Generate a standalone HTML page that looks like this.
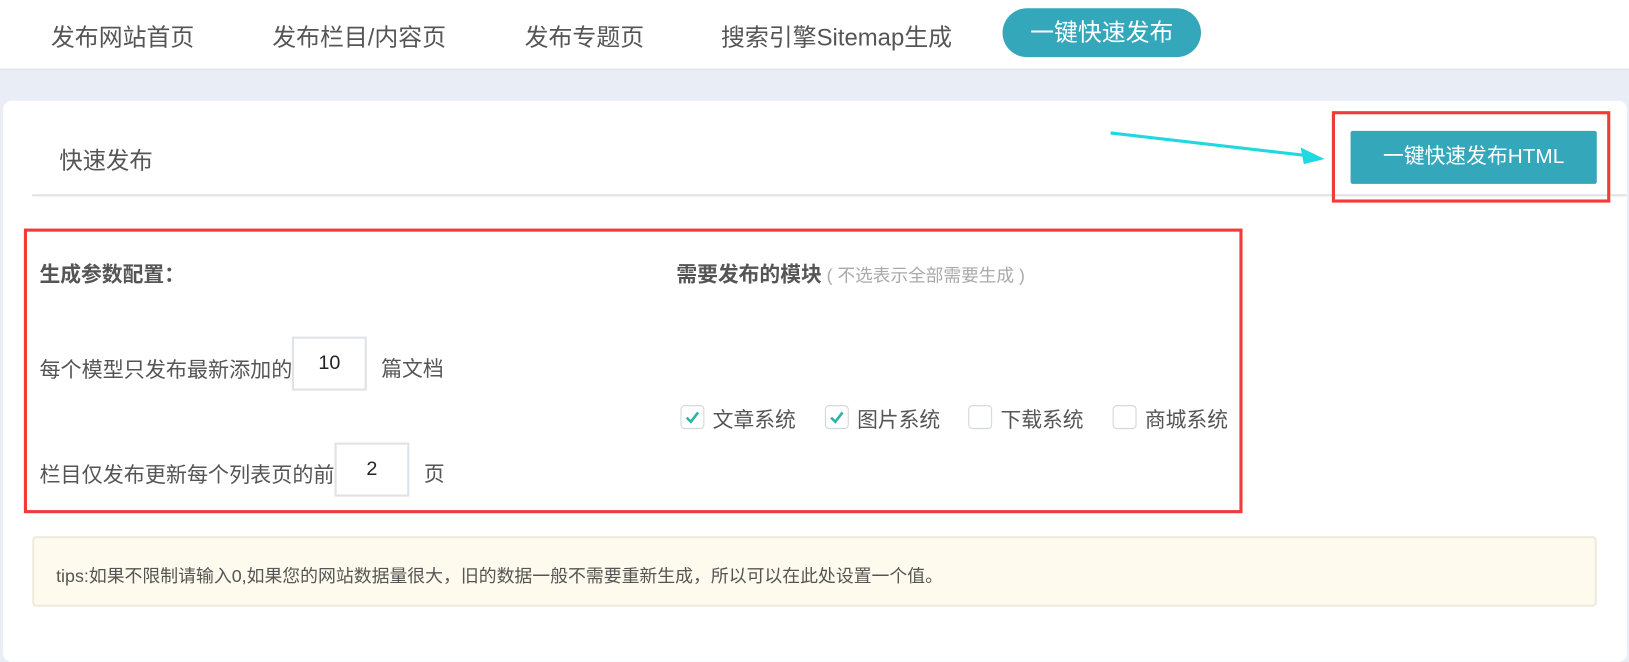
<!DOCTYPE html>
<html><head><meta charset="utf-8"><style>
*{margin:0;padding:0;box-sizing:border-box}
body{width:1629px;height:625px;overflow:hidden;background:#e9eef6;font-family:"Liberation Sans","Noto Sans CJK SC",sans-serif;color:#555;position:relative}
#w{position:absolute;left:0;top:0;width:1568px;height:602px;transform:scale(1.0389);transform-origin:0 0}
.a{position:absolute;white-space:nowrap}
.nav{position:absolute;left:0;top:0;width:1568px;height:68px;background:#fff;border-bottom:2px solid #e3e6ea}
.nav .a{font-size:23px;top:17px;color:#555}
.pill{left:965px;top:8px!important;width:191px;height:47px;border-radius:24px;background:#35a7bb;color:#fff!important;text-align:center;line-height:47px}
.card{position:absolute;left:3px;top:97px;width:1563px;height:540px;background:#fff;border-radius:8px}
.inp{position:absolute;width:72px;height:52px;border:2px solid #dde3e6;text-align:center;line-height:48px;font-size:19px;color:#222}
.cb{position:absolute;width:23px;height:23px;border:1px solid #cfd6da;border-radius:4px;top:390px;background:#fff}
.lbl{font-size:20px;color:#555;top:388px}
</style></head><body><div id="w">
<div class="nav">
<div class="a" style="left:49px">发布网站首页</div>
<div class="a" style="left:262px">发布栏目/内容页</div>
<div class="a" style="left:505px">发布专题页</div>
<div class="a" style="left:694px">搜索引擎Sitemap生成</div>
<div class="a pill">一键快速发布</div>
</div>
<div class="card"></div>
<div class="a" style="left:57px;top:137px;font-size:22.5px;color:#555">快速发布</div>
<div class="a" style="left:31px;top:187px;width:1535px;height:2px;background:#dde3e6"></div>
<svg class="a" style="left:1060px;top:120px" width="225" height="45"><line x1="9" y1="8" x2="200" y2="30" stroke="#1ed9df" stroke-width="3"/><polygon points="215,33 192,22 195,38" fill="#1ed9df"/></svg>
<div class="a" style="left:1282px;top:107px;width:268px;height:88px;border:3px solid #f23a3a"></div>
<div class="a" style="left:1300px;top:126px;width:237px;height:51px;background:#35a7bb;color:#fff;font-size:20px;text-align:center;line-height:51px;border-radius:2px">一键快速发布HTML</div>
<div class="a" style="left:23px;top:220px;width:1173px;height:274px;border:3px solid #f23a3a"></div>
<div class="a" style="left:38px;top:248px;font-size:20px;font-weight:bold;color:#555">生成参数配置：</div>
<div class="a" style="left:651px;top:248px;font-size:20px;font-weight:bold;color:#555">需要发布的模块<span style="font-weight:normal;font-size:17px;color:#aaa"> ( 不选表示全部需要生成 )</span></div>
<div class="a" style="left:38px;top:339px;font-size:20.3px">每个模型只发布最新添加的</div>
<div class="inp" style="left:281px;top:324px">10</div>
<div class="a" style="left:367px;top:339px;font-size:20px">篇文档</div>
<div class="a" style="left:38px;top:440px;font-size:20.3px">栏目仅发布更新每个列表页的前</div>
<div class="inp" style="left:322px;top:426px">2</div>
<div class="a" style="left:408px;top:440px;font-size:20px">页</div>
<div class="cb" style="left:655px"><svg width="21" height="21"><path d="M5 11 L9 15 L16 6" stroke="#2bb3a8" stroke-width="2.5" fill="none"/></svg></div>
<div class="a lbl" style="left:686px">文章系统</div>
<div class="cb" style="left:794px"><svg width="21" height="21"><path d="M5 11 L9 15 L16 6" stroke="#2bb3a8" stroke-width="2.5" fill="none"/></svg></div>
<div class="a lbl" style="left:825px">图片系统</div>
<div class="cb" style="left:932px"></div>
<div class="a lbl" style="left:963px">下载系统</div>
<div class="cb" style="left:1071px"></div>
<div class="a lbl" style="left:1102px">商城系统</div>
<div class="a" style="left:31px;top:516px;width:1506px;height:68px;background:#fefaed;border:2px solid #eeeadd;border-radius:4px"></div>
<div class="a" style="left:54px;top:540px;font-size:17.2px;color:#555">tips:如果不限制请输入0,如果您的网站数据量很大，旧的数据一般不需要重新生成，所以可以在此处设置一个值。</div>
</div></body></html>
